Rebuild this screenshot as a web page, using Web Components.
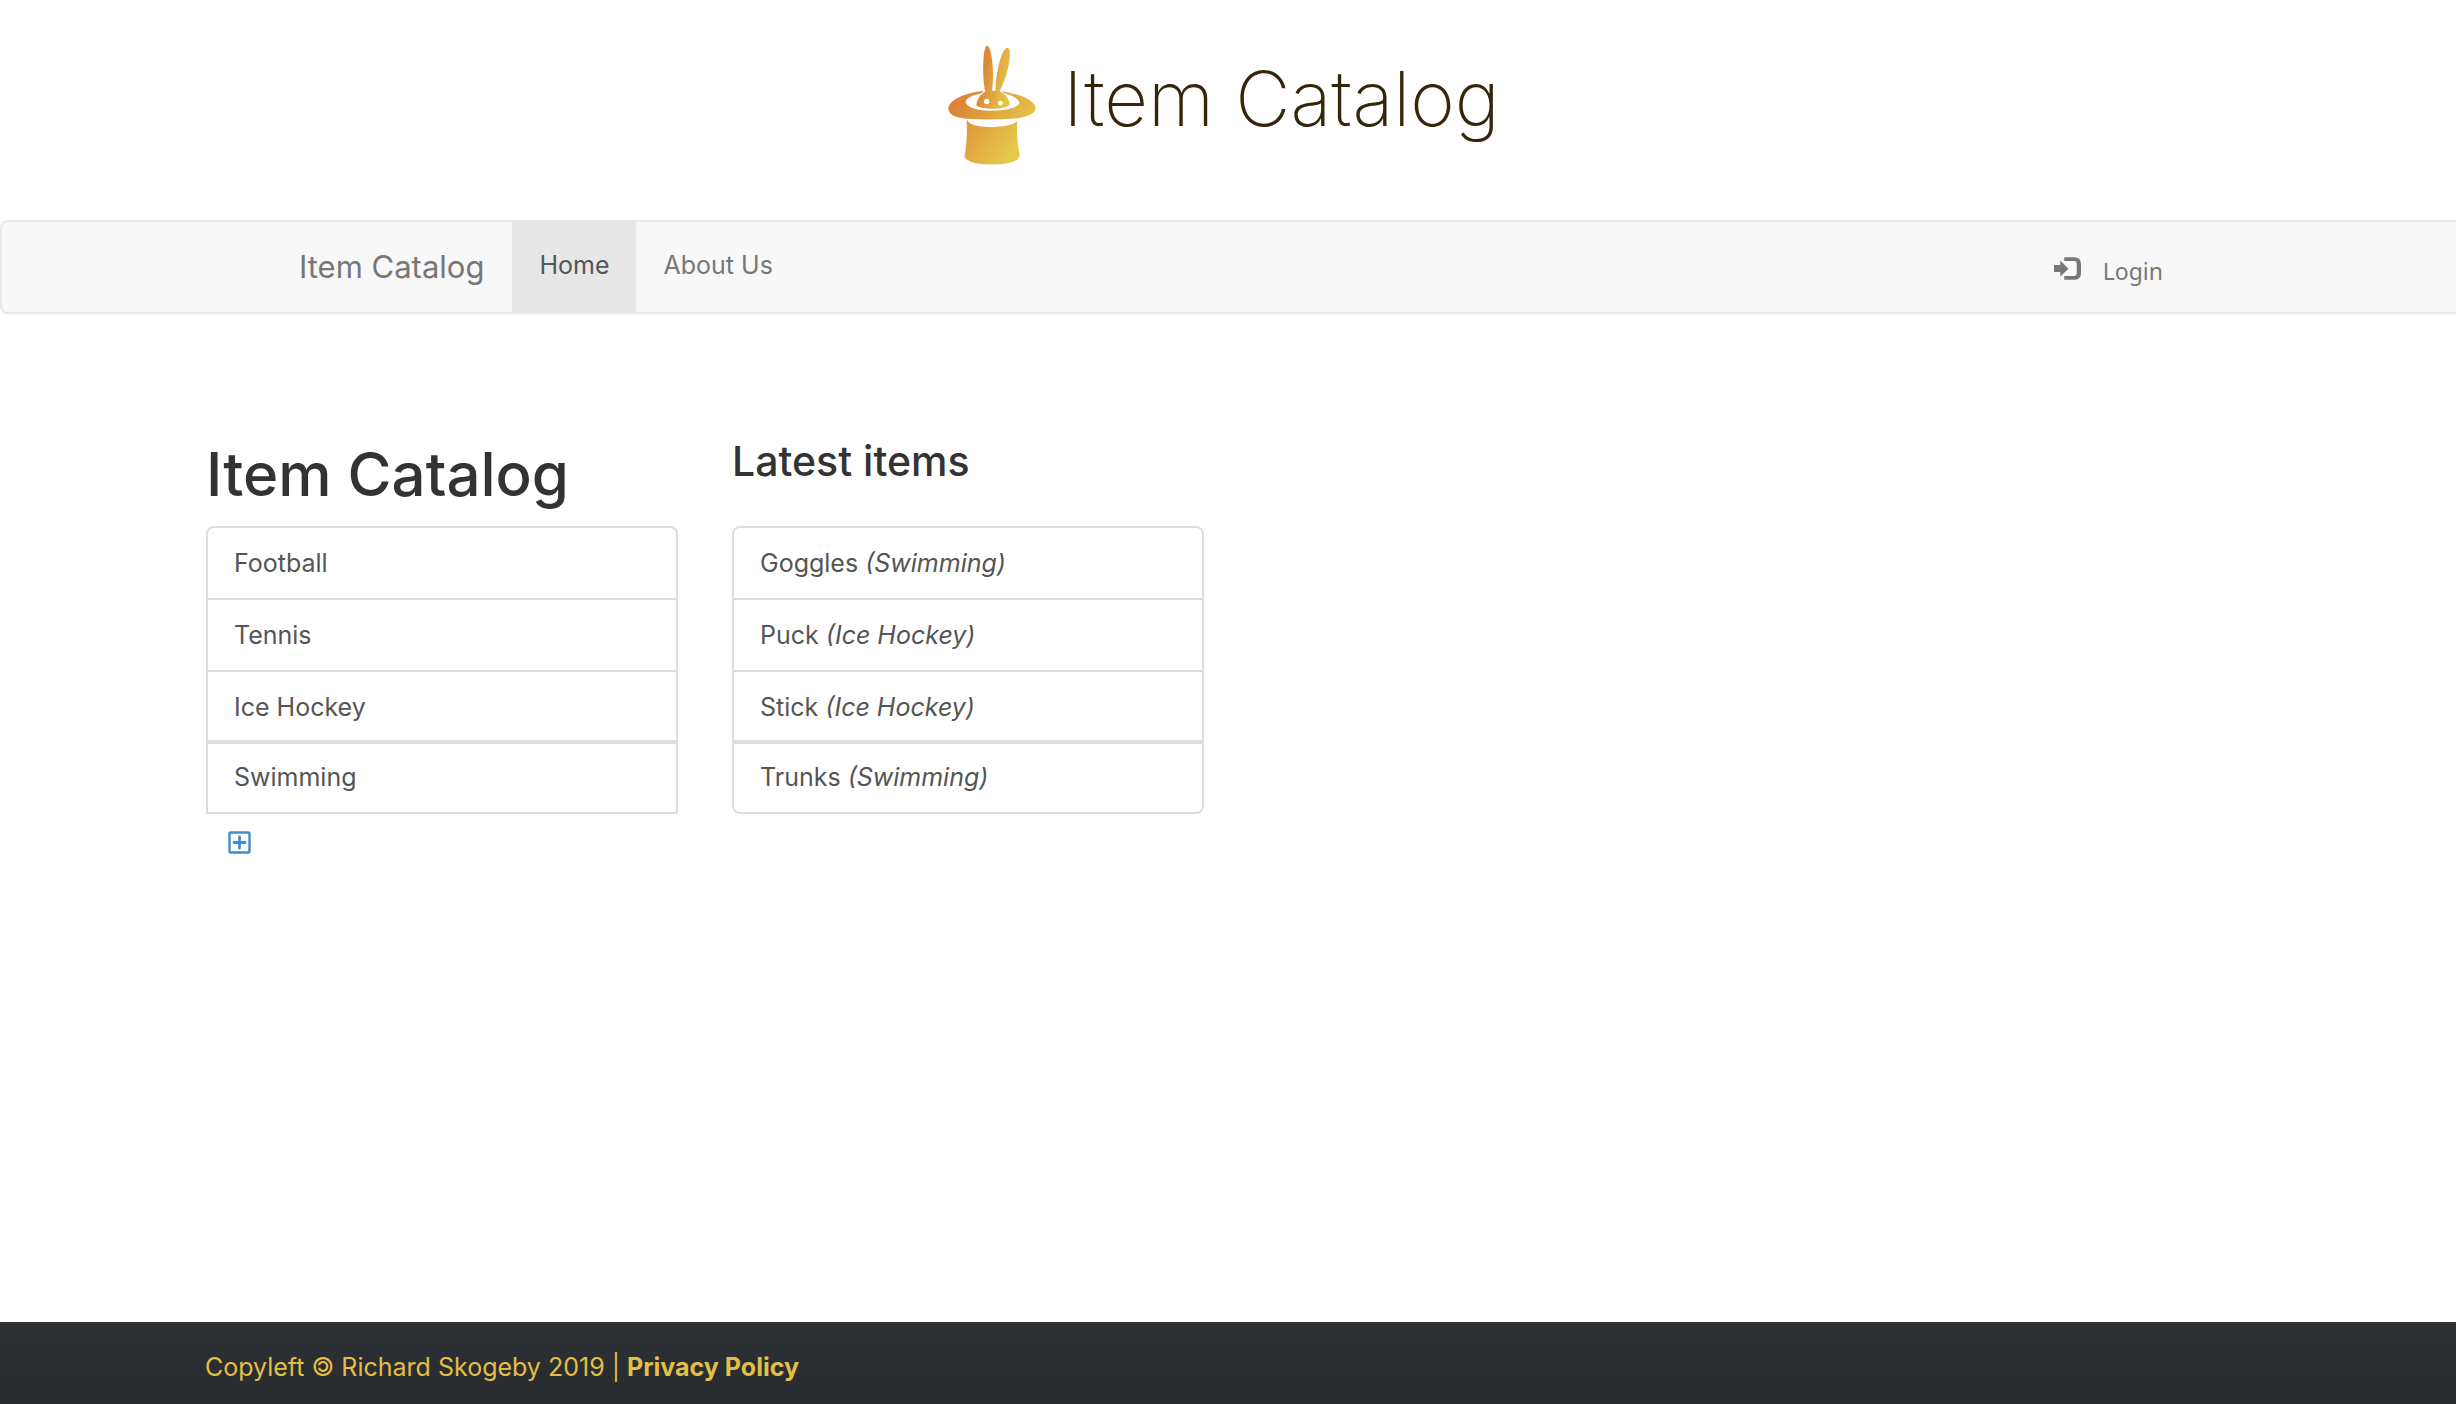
<!DOCTYPE html>
<html lang="en">
<head>
<meta charset="utf-8">
<meta name="viewport" content="width=device-width, initial-scale=1">
<title>Item Catalog</title>
<style>
  body { margin: 0; background: #fff; color: #333; font-family: Inter, "Liberation Sans", sans-serif; font-size: 25px; line-height: 36px; }
</style>
</head>
<body>
<catalog-page>
  <site-logo slot="header">Item Catalog</site-logo>
  <nav-bar slot="nav">
    <span slot="brand">Item Catalog</span>
    <nav-tab active>Home</nav-tab>
    <nav-tab>About Us</nav-tab>
    <login-link slot="end">Login</login-link>
  </nav-bar>
  <item-panel level="1" heading="Item Catalog">
    <list-row first>Football</list-row>
    <list-row>Tennis</list-row>
    <list-row>Ice Hockey</list-row>
    <list-row last square>Swimming</list-row>
    <add-button slot="actions"></add-button>
  </item-panel>
  <item-panel level="2" heading="Latest items">
    <list-row first>Goggles <em>(Swimming)</em></list-row>
    <list-row>Puck <em>(Ice Hockey)</em></list-row>
    <list-row>Stick <em>(Ice Hockey)</em></list-row>
    <list-row last>Trunks <em>(Swimming)</em></list-row>
  </item-panel>
  <site-footer slot="footer"></site-footer>
</catalog-page>

<script>
function define(name, html) {
  const template = document.createElement('template');
  template.innerHTML = html;
  customElements.define(name, class extends HTMLElement {
    constructor() {
      super();
      this.attachShadow({ mode: 'open' }).append(template.content.cloneNode(true));
    }
  });
}

define('catalog-page', `
  <style>
    :host { display: flex; flex-direction: column; min-height: 100vh; }
    main { flex: 1; display: grid; grid-template-columns: repeat(auto-fill, minmax(0, 472px)); align-items: start; gap: 54px; padding: 126px 206px 54px; }
  </style>
  <slot name="header"></slot>
  <slot name="nav"></slot>
  <main><slot></slot></main>
  <slot name="footer"></slot>`);

define('site-logo', `
  <style>
    :host { display: flex; justify-content: center; align-items: flex-start; gap: 27px; padding: 45px 8px 55px 0; color: #35260b; }
    svg { width: 88px; height: 120px; flex: none; }
    span { font-size: 76px; font-weight: 200; line-height: 106px; }
  </style>
  <svg viewBox="53 44 264 359" aria-hidden="true">
    <defs>
      <linearGradient id="hat" gradientUnits="userSpaceOnUse" x1="70" y1="180" x2="270" y2="330">
        <stop offset="0" stop-color="#db7b34"/><stop offset="1" stop-color="#e6c84b"/>
      </linearGradient>
      <linearGradient id="rabbit" gradientUnits="userSpaceOnUse" x1="145" y1="130" x2="240" y2="150">
        <stop offset="0" stop-color="#db8033"/><stop offset="1" stop-color="#e5c64a"/>
      </linearGradient>
    </defs>
    <path fill="url(#hat)" d="M160 181C105 187 55 208 54 235C55 252 75 262 108 265Q185 270 262 263C297 258 316 248 316 232C313 209 270 191 214 182L222 188C247 194 267 206 267 218C262 232 229 241 185 241C141 241 110 230 106 215C108 202 128 193 151 190Z"/>
    <path fill="url(#hat)" d="M109 268L112 271Q120 288 178 290Q240 289 259 274L261 266Q257 325 268 371Q269 379 261 387Q242 402 184 402Q128 402 108 386Q101 380 103 374Q112 330 109 268Z"/>
    <path fill="url(#rabbit)" d="M165 183C155 145 157 46 170 46C186 46 193 145 185 181L196 181C195 140 212 52 232 52C247 56 236 130 208 182C224 190 237 203 239 223Q228 234 189 235Q148 234 138 224C141 203 152 190 165 183Z"/>
    <circle cx="169" cy="213" r="8" fill="#fff"/><circle cx="210" cy="218" r="7" fill="#fff"/>
  </svg>
  <span><slot></slot></span>`);

define('nav-bar', `
  <style>
    :host { display: block; border: 2px solid #e7e7e7; border-right: 0; border-radius: 8px 0 0 8px; background: #f8f8f8; }
    nav { display: flex; padding: 0 293px 0 297px; }
    .brand { padding-right: 28px; font-size: 31px; line-height: 90px; color: #777; text-decoration: none; }
    .end { margin-left: auto; }
  </style>
  <nav>
    <a class="brand" href="#"><slot name="brand"></slot></a>
    <slot></slot>
    <div class="end"><slot name="end"></slot></div>
  </nav>`);

define('nav-tab', `
  <style>
    :host { display: block; }
    a { display: block; padding: 23px 27px 27px; line-height: 40px; color: #777; text-decoration: none; }
    :host([active]) a { background: #e7e7e7; color: #555; }
  </style>
  <a href="#"><slot></slot></a>`);

define('login-link', `
  <style>
    :host { display: block; }
    a { display: flex; align-items: center; gap: 22px; padding-top: 8px; font: 23px/82px "Noto Sans", sans-serif; color: #777; text-decoration: none; }
    svg { width: 27px; height: 23px; padding-bottom: 5px; }
  </style>
  <a href="#">
    <svg viewBox="38 51 82 69" fill="currentColor" aria-hidden="true">
      <path d="M38 75H57V61L82 86L57 110V96H38Z"/>
      <path d="M69 51H99Q120 51 120 72V99Q120 120 99 120H69V108H100Q107 108 107 101V70Q107 63 100 63H69Z"/>
    </svg><span><slot></slot></span>
  </a>`);

customElements.define('item-panel', class extends HTMLElement {
  constructor() {
    super();
    const tag = 'h' + this.getAttribute('level');
    this.attachShadow({ mode: 'open' }).innerHTML = `
      <style>
        :host { display: block; }
        header { min-height: 86px; }
        h1, h2 { margin: 0; font-weight: 500; color: #333; }
        h1 { font-size: 60px; line-height: 68px; }
        h2 { font-size: 41px; line-height: 42px; }
      </style>
      <header><${tag}>${this.getAttribute('heading')}</${tag}></header>
      <div role="list"><slot></slot></div>
      <slot name="actions"></slot>`;
  }
});

define('list-row', `
  <style>
    :host { display: block; }
    a { display: block; padding: 17px 26px; border: 2px solid #ddd; border-bottom: 0; background: #fff; color: #555; text-decoration: none; }
    :host([first]) a { border-radius: 8px 8px 0 0; }
    :host([last]) a { padding: 15px 26px 17px; border-top-width: 4px; border-bottom: 2px solid #ddd; border-radius: 0 0 8px 8px; }
    :host([last]) { margin-top: -2px; }
    :host([last][square]) a { border-radius: 0; }
  </style>
  <a href="#" role="listitem"><slot></slot></a>`);

define('add-button', `
  <style>
    :host { display: flex; padding: 17px 22px; }
    button { display: flex; padding: 0; border: 0; background: none; color: #428bca; }
    svg { width: 23px; height: 23px; }
  </style>
  <button type="button" aria-label="Add category">
    <svg viewBox="0 0 23 23" fill="none" stroke="currentColor" aria-hidden="true">
      <rect x="1.5" y="1.5" width="20" height="20" rx="1.5" stroke-width="2.4"/>
      <path d="M6 11.5H17M11.5 6V17" stroke-width="2.8" stroke-linecap="round"/>
    </svg>
  </button>`);

define('site-footer', `
  <style>
    :host { display: block; padding: 27px 205px 19px; background: linear-gradient(#2d3134, #292b2f); color: #e2bf45; }
    a { color: inherit; font-weight: 700; text-decoration: none; }
  </style>
  <footer>Copyleft 🄯 Richard Skogeby 2019 | <a href="#">Privacy Policy</a></footer>`);
</script>
</body>
</html>
